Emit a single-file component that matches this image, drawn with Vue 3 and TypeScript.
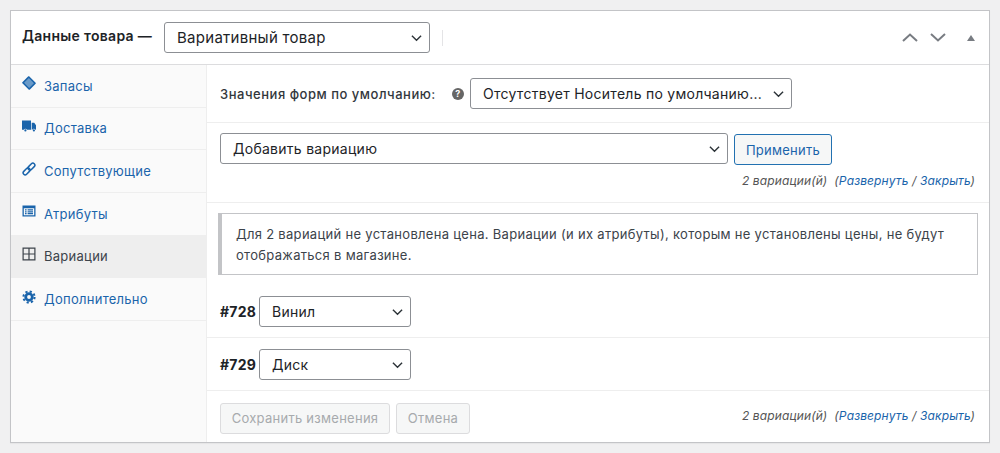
<script setup lang="ts">
interface Tab {
  label: string
  icon: string
  active?: boolean
}

const tabs: Tab[] = [
  { label: 'Запасы', icon: 'tag' },
  { label: 'Доставка', icon: 'truck' },
  { label: 'Сопутствующие', icon: 'link' },
  { label: 'Атрибуты', icon: 'card' },
  { label: 'Вариации', icon: 'grid', active: true },
  { label: 'Дополнительно', icon: 'gear' }
]

const variations = [
  { id: '#728', value: 'Винил' },
  { id: '#729', value: 'Диск' }
]
</script>

<template>
  <div class="page">
    <section class="box">
      <header class="box-head">
        <h2 class="title">Данные товара —</h2>
        <div class="select-wrap type-select">
          <select><option>Вариативный товар</option></select>
          <svg class="chevron" viewBox="0 0 12 8"><path d="M1 1.5l5 5 5-5" /></svg>
        </div>
        <span class="head-divider"></span>
        <div class="head-actions">
          <svg class="arrow" viewBox="0 0 16 9"><path d="M1 8l7-6.5L15 8" /></svg>
          <svg class="arrow" viewBox="0 0 16 9"><path d="M1 1l7 6.5L15 1" /></svg>
          <span class="toggle"></span>
        </div>
      </header>

      <div class="box-body">
        <ul class="tabs">
          <li v-for="tab in tabs" :key="tab.label" class="tab" :class="{ active: tab.active }">
            <svg class="tab-icon" viewBox="0 0 14 14">
              <g v-if="tab.icon === 'tag'" transform="rotate(-45 7 7)">
                <rect x="2.2" y="1.8" width="9.6" height="10.4" rx="0.6" />
                <rect x="3.6" y="3.4" width="6.8" height="7.2" fill="#fff" opacity="0.35" />
              </g>
              <path v-else-if="tab.icon === 'truck'" fill-rule="evenodd" d="M0 1.5h9v9.3H5a1.7 1.7 0 0 0-3.2 0H0zM9.7 3.8h2.5L14 6.2v4.6h-.5a1.7 1.7 0 0 0-3.2 0h-.6zM3.4 10.3a1.1 1.1 0 1 1 0 2.2 1.1 1.1 0 0 1 0-2.2zM11.900 10.3a1.1 1.1 0 1 1 0 2.2 1.1 1.1 0 0 1 0-2.2z" />
              <g v-else-if="tab.icon === 'link'" class="outline" transform="rotate(-45 7 7)">
                <rect x="-0.4" y="5" width="8" height="4" rx="2" />
                <rect x="6.4" y="5" width="8" height="4" rx="2" />
              </g>
              <path v-else-if="tab.icon === 'card'" fill-rule="evenodd" d="M0.5 1.5h13v11h-13zM1.8 4.2v7h10.4v-7zM3 5.3h1.6v1.3H3zM5.6 5.3H11v1.3H5.6zM3 7.2h1.6v1.3H3zM5.6 7.2H11v1.3H5.6zM3 9.1h1.6v1.2H3zM5.6 9.1H11v1.2H5.6z" />
              <path v-else-if="tab.icon === 'grid'" fill-rule="evenodd" d="M0.5 0.5h13v13H0.5zM1.7 1.7v4.7h4.7V1.7zM7.6 1.7v4.7h4.7V1.7zM1.7 7.6v4.7h4.7V7.6zM7.6 7.6v4.7h4.7V7.6z" />
              <g v-else class="outline">
                <circle cx="7" cy="7" r="3.3" class="gear-ring" />
                <circle cx="7" cy="7" r="5.6" class="gear-teeth" />
              </g>
            </svg>
            <span class="tab-label">{{ tab.label }}</span>
          </li>
        </ul>

        <div class="panel">
          <div class="defaults">
            <span class="defaults-label">Значения форм по умолчанию:</span>
            <span class="help">?</span>
            <div class="select-wrap defaults-select">
              <select><option>Отсутствует Носитель по умолчанию...</option></select>
              <svg class="chevron" viewBox="0 0 12 8"><path d="M1 1.5l5 5 5-5" /></svg>
            </div>
          </div>

          <div class="toolbar">
            <div class="toolbar-row">
              <div class="select-wrap add-select">
                <select><option>Добавить вариацию</option></select>
                <svg class="chevron" viewBox="0 0 12 8"><path d="M1 1.5l5 5 5-5" /></svg>
              </div>
              <button class="btn-apply" type="button">Применить</button>
            </div>
            <p class="counter">
              2 вариации(й) &nbsp;(<a>Развернуть</a> / <a>Закрыть</a>)
            </p>
          </div>

          <div class="notice">
            Для 2 вариаций не установлена цена. Вариации (и их атрибуты), которым не установлены цены, не будут отображаться в магазине.
          </div>

          <div v-for="item in variations" :key="item.id" class="variation">
            <strong class="variation-id">{{ item.id }}</strong>
            <div class="select-wrap variation-select">
              <select><option>{{ item.value }}</option></select>
              <svg class="chevron" viewBox="0 0 12 8"><path d="M1 1.5l5 5 5-5" /></svg>
            </div>
          </div>

          <div class="panel-foot">
            <button class="btn-muted btn-save" type="button" disabled>Сохранить изменения</button>
            <button class="btn-muted btn-cancel" type="button" disabled>Отмена</button>
            <p class="counter foot-counter">
              2 вариации(й) &nbsp;(<a>Развернуть</a> / <a>Закрыть</a>)
            </p>
          </div>
        </div>
      </div>
    </section>
  </div>
</template>

<style>
html,
body {
  margin: 0;
  background: #f0f0f1;
}
</style>

<style scoped>
.page {
  box-sizing: border-box;
  width: 1000px;
  height: 453px;
  padding: 10px;
  font-family: Inter, "Noto Sans", sans-serif;
  font-size: 13px;
  letter-spacing: 0.27px;
  color: #3c434a;
}

.box {
  box-sizing: border-box;
  height: 433px;
  background: #fff;
  border: 1px solid #c3c4c7;
  box-shadow: 0 1px 1px rgba(0, 0, 0, 0.04);
  display: flex;
  flex-direction: column;
}

.box-head {
  height: 54px;
  flex: none;
  box-sizing: border-box;
  display: flex;
  align-items: center;
  padding-left: 11px;
  border-bottom: 1px solid #dcdcde;
}

.title {
  margin: 0 12px 5px 0;
  font-size: 14px;
  font-weight: 600;
  letter-spacing: 0.3px;
  color: #1d2327;
}

.select-wrap {
  position: relative;
  box-sizing: border-box;
  height: 31px;
  flex: none;
}

.select-wrap select {
  appearance: none;
  box-sizing: border-box;
  width: 100%;
  height: 100%;
  padding: 0 30px 0 12px;
  background: #fff;
  border: 1px solid #8c8f94;
  border-radius: 3px;
  font-family: inherit;
  font-size: 14px;
  letter-spacing: inherit;
  color: #1d2327;
  text-overflow: ellipsis;
}

.chevron {
  position: absolute;
  right: 8px;
  top: 12px;
  width: 11px;
  height: 8px;
  fill: none;
  stroke: #2c3338;
  stroke-width: 1.5;
  pointer-events: none;
}

.type-select {
  width: 266px;
}

.type-select select {
  font-size: 15px;
}

.head-divider {
  width: 1px;
  height: 16px;
  margin-left: 12px;
  background: #e4e4e6;
}

.head-actions {
  margin-left: auto;
  padding-right: 14px;
  display: flex;
  align-items: center;
  gap: 12px;
}

.arrow {
  width: 16px;
  height: 9px;
  fill: none;
  stroke: #787c82;
  stroke-width: 2;
}

.toggle {
  width: 0;
  height: 0;
  margin-left: 9px;
  border-left: 4px solid transparent;
  border-right: 4px solid transparent;
  border-bottom: 6px solid #787c82;
}

.box-body {
  flex: 1;
  display: flex;
  min-height: 0;
}

.tabs {
  width: 195px;
  flex: none;
  margin: 0;
  padding: 0;
  list-style: none;
  background: #fafafa;
  border-right: 1px solid #eee;
}

.tab {
  box-sizing: border-box;
  height: 42.67px;
  display: flex;
  align-items: center;
  gap: 8px;
  padding: 0 0 0 11px;
  border-bottom: 1px solid #eee;
  color: #1a64ab;
}

.tab.active {
  background: #eee;
  color: #3c434a;
}

.tab-icon {
  width: 14px;
  height: 14px;
  margin-top: -5px;
  flex: none;
  fill: currentColor;
}

.outline rect,
.outline circle {
  fill: none;
  stroke: currentColor;
}

.outline rect {
  stroke-width: 1.5;
}

.gear-ring {
  stroke-width: 2.8;
}

.gear-teeth {
  stroke-width: 2;
  stroke-dasharray: 2.2 2.2;
}

.panel {
  flex: 1;
  min-width: 0;
  display: flex;
  flex-direction: column;
}

.defaults {
  box-sizing: border-box;
  height: 58px;
  flex: none;
  display: flex;
  align-items: center;
  padding-left: 13px;
  border-bottom: 1px solid #eee;
}

.defaults-label {
  width: 232px;
  font-weight: 500;
  letter-spacing: 0.52px;
  color: #32373c;
}

.help {
  width: 12px;
  height: 12px;
  border-radius: 50%;
  background: #666;
  color: #fff;
  font-size: 9px;
  font-weight: 700;
  line-height: 12px;
  text-align: center;
}

.defaults-select {
  width: 322px;
  margin-left: 6px;
}

.defaults-select select {
  padding-right: 20px;
}

.toolbar {
  box-sizing: border-box;
  height: 80px;
  flex: none;
  padding: 10px 14px 0 13px;
  border-bottom: 1px solid #eee;
}

.toolbar-row {
  display: flex;
  gap: 6px;
}

.add-select {
  width: 508px;
}

.btn-apply {
  box-sizing: border-box;
  width: 98px;
  height: 31px;
  margin-top: 1px;
  background: #f6f7f7;
  border: 1px solid #2271b1;
  border-radius: 3px;
  font-family: inherit;
  font-size: 13px;
  letter-spacing: inherit;
  color: #1a64ab;
}

.counter {
  margin: 8px 0 0;
  text-align: right;
  font-size: 12px;
  font-style: italic;
  letter-spacing: 0.12px;
  color: #555;
}

.counter a {
  color: #1a64ab;
}

.notice {
  box-sizing: border-box;
  height: 62px;
  flex: none;
  margin: 10px 11px 10px 11px;
  padding: 10px 14px;
  background: #fff;
  border: 1px solid #c3c4c7;
  border-left: 4px solid #c3c4c7;
  line-height: 21px;
  letter-spacing: 0.3px;
  color: #3c434a;
}

.variation {
  box-sizing: border-box;
  height: 53px;
  flex: none;
  display: flex;
  align-items: center;
  gap: 3px;
  padding-left: 13px;
  border-bottom: 1px solid #eee;
}

.variation-id {
  width: 36px;
  font-size: 14px;
  color: #1d2327;
}

.variation-select {
  width: 152px;
}

.panel-foot {
  flex: 1;
  display: flex;
  align-items: center;
  gap: 6px;
  padding: 3px 14px 0 13px;
}

.btn-muted {
  box-sizing: border-box;
  height: 31px;
  padding: 0;
  background: #f6f7f7;
  border: 1px solid #dcdcde;
  border-radius: 3px;
  font-family: inherit;
  font-size: 13px;
  letter-spacing: inherit;
  color: #a7aaad;
}

.btn-save {
  width: 170px;
}

.btn-cancel {
  width: 74px;
}

.foot-counter {
  margin: 0 0 6px auto;
}
</style>
